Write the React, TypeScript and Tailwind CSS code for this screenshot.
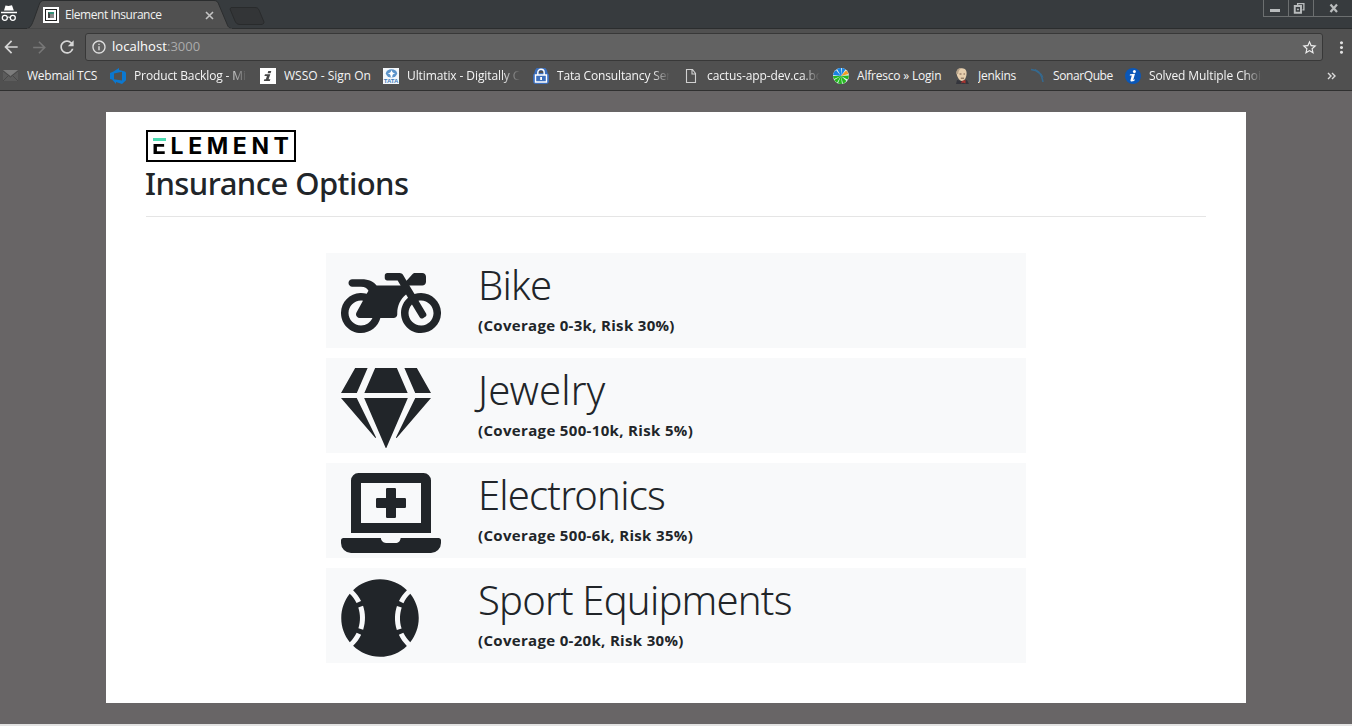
import React from "react";
import { FaMotorcycle, FaGem, FaLaptopMedical, FaBaseballBall } from "react-icons/fa";
import { MdArrowBack, MdArrowForward, MdRefresh, MdInfoOutline, MdStarBorder, MdMoreVert } from "react-icons/md";

const options = [
  { Icon: FaMotorcycle, title: "Bike", detail: "(Coverage 0-3k, Risk 30%)", box: "w-[100px]", tracking: "tracking-[-0.8px]", sub: "tracking-[0.32px]" },
  { Icon: FaGem, title: "Jewelry", detail: "(Coverage 500-10k, Risk 5%)", box: "w-[90px]", tracking: "tracking-[0.1px]", sub: "tracking-[0.34px]" },
  { Icon: FaLaptopMedical, title: "Electronics", detail: "(Coverage 500-6k, Risk 35%)", box: "w-[100px]", tracking: "tracking-[-0.8px]", sub: "tracking-[0.34px]" },
  { Icon: FaBaseballBall, title: "Sport Equipments", detail: "(Coverage 0-20k, Risk 30%)", box: "w-[78px]", tracking: "tracking-[-0.8px]", sub: "tracking-[0.32px]" },
];

const MailIcon = () => (
  <svg className="size-4" viewBox="0 0 16 16">
    <path d="M0 2h15v11H0z" fill="#5c5c5c" />
    <path d="M0 2l7.5 6L15 2z" fill="#7c7c7c" />
    <path d="M0 3l7.5 6L15 3M0 13l5-5M15 13l-5-5" stroke="#484848" fill="none" />
  </svg>
);
const BacklogIcon = () => (
  <svg className="size-4" viewBox="0 0 16 16">
    <path fillRule="evenodd" d="M0 5l3-1.2L9 0v2l6 1.5 1 1.2v7.6L12 16l-6-2v2l-4-4.5L0 11zM4 5.5v5.8l8 1.2V3.7z" fill="#0b78d0" />
  </svg>
);
const InfoSquare = () => (
  <svg className="size-4" viewBox="0 0 16 16">
    <path d="M0 0h16v16H0z" fill="#fff" />
    <path d="M8.300 3h3l-.7 2.200H7.600zM5 6.200h5.300l-1.700 5h1.800l-.6 1.800H3.800l.6-1.800h1.500l1-3.200H4.400z" fill="#444" />
  </svg>
);
const TataIcon = () => (
  <span className="flex size-4 flex-col items-center bg-[#f4f8fc]">
    <svg className="h-[10px] w-[13px] shrink-0" viewBox="0 0 13 10">
      <ellipse cx="6.5" cy="5.3" rx="5.6" ry="4.100" fill="#5b94cb" />
      <path d="M2.500 5.500C5 5 6 4 6.200 2.500h.6C7 4 8 5 10.500 5.500 8 5.500 7.200 7 7.200 9.500H5.800C5.800 7 5 5.500 2.500 5.500z" fill="#fff" />
    </svg>
    <span className="font-['Liberation_Sans'] text-[6px] font-bold leading-[6px] text-[#3f7cba]">TATA</span>
  </span>
);
const LockIcon = () => (
  <svg className="size-4" viewBox="0 0 16 16">
    <rect x="0" y="5" width="16" height="11" rx="3" fill="#3c6fbd" />
    <path d="M3.500 7V4.500a4.500 4 0 0 1 9 0V7" fill="none" stroke="#3c6fbd" strokeWidth="4" />
    <path d="M4.800 7V4.500a3.200 3.200 0 0 1 6.400 0V7M2.500 7h11v7h-11z" fill="none" stroke="#fff" strokeWidth="1.400" />
    <path d="M7.200 9h1.800v3H7.200z" fill="#fff" />
  </svg>
);
const PageIcon = () => (
  <svg className="size-4" viewBox="0 0 16 16">
    <path d="M3.500 1.500h6l3 4v9h-9zM9 1.500V6h3.500" fill="none" stroke="#d0d0d0" strokeWidth="1.100" />
  </svg>
);
const PinwheelIcon = () => (
  <svg className="size-4" viewBox="0 0 16 16">
    <circle cx="8" cy="8" r="8" fill="#dff3f2" />
    <path d="M8 8L0 7a8 8 0 0 1 3-5zM8 8L4 1a8 8 0 0 1 4-1z" fill="#1a82e2" />
    <path d="M8 8L9 0a8 8 0 0 1 3.500 1.500z" fill="#1a82e2" />
    <path d="M8 8l5-5.500A8 8 0 0 1 15.500 6z" fill="#f49b1f" />
    <path d="M8 8l8-.5a8 8 0 0 1-1.500 4zM8 8l5.500 5A8 8 0 0 1 10 15.700zM8 8l1 8a8 8 0 0 1-4-.8zM8 8l-4 6.800A8 8 0 0 1 1.300 12zM8 8l-7 3A8 8 0 0 1 0 8z" fill="#26b51e" />
  </svg>
);
const ButlerIcon = () => (
  <svg className="size-4" viewBox="0 0 16 16">
    <path d="M2 16l1-4 5 1 5-1 2 4z" fill="#34353c" />
    <path d="M2.500 5C2.500 1.500 5 0 8 .2c3.500.1 5 2.800 4.500 6.300-.3 3-2 6.500-4.500 6.500S3 9 2.500 5z" fill="#e7cfae" />
    <path d="M2.500 6C2 2 4 0 7.500 0 5 1.500 4.500 3 4.200 6z" fill="#b8a48a" />
    <path d="M5.500 6h2M9.500 6H11M6.800 10.200h3.200" stroke="#6b5142" strokeWidth=".9" />
    <path d="M8 13l3.500-1v3.500L9 14.500l-2 1z" fill="#a9342f" />
  </svg>
);
const SonarIcon = () => (
  <svg className="size-4" viewBox="0 0 16 16" fill="none" stroke="#356a90">
    <path d="M2 1.500c7 .5 11 5 12 12.500" strokeWidth="1.500" />
    <path d="M6 1.500c4 1.500 7 4.500 8 8" strokeWidth=".9" />
  </svg>
);
const InfoRound = () => (
  <svg className="size-4" viewBox="0 0 16 16">
    <circle cx="8" cy="8" r="8" fill="#0a57b8" />
    <circle cx="9.400" cy="3.400" r="1.500" fill="#fff" />
    <path d="M5 6.200L10 5.800l-1.800 6.200 1.800-.8-.4 1.400c-1.200 1-4.700 1.700-4.100-.6l1.300-4.500H4.700z" fill="#fff" />
  </svg>
);

const fade = "[mask-image:linear-gradient(to_right,black_84%,transparent)]";
const bookmarks = [
  { Icon: MailIcon, label: "Webmail TCS", cell: "w-[107px]", text: "w-[80px] tracking-[-0.25px]" },
  { Icon: BacklogIcon, label: "Product Backlog - Micro", cell: "w-[150px]", text: "w-[113px] tracking-[-0.12px] " + fade },
  { Icon: InfoSquare, label: "WSSO - Sign On", cell: "w-[123px]", text: "w-[96px] tracking-[0px]" },
  { Icon: TataIcon, label: "Ultimatix - Digitally Con", cell: "w-[150px]", text: "w-[113px] tracking-[-0.1px] " + fade },
  { Icon: LockIcon, label: "Tata Consultancy Services", cell: "w-[150px]", text: "w-[113px] tracking-[-0.15px] " + fade },
  { Icon: PageIcon, label: "cactus-app-dev.ca.boe", cell: "w-[150px]", text: "w-[113px] tracking-[-0.1px] " + fade },
  { Icon: PinwheelIcon, label: "Alfresco » Login", cell: "w-[121px]", text: "w-[95px] tracking-[-0.2px]" },
  { Icon: ButlerIcon, label: "Jenkins", cell: "w-[75px]", text: "w-[50px] tracking-[-0.25px]" },
  { Icon: SonarIcon, label: "SonarQube", cell: "w-[96px]", text: "w-[70px] tracking-[-0.4px]" },
  { Icon: InfoRound, label: "Solved Multiple Choice", cell: "w-[150px]", text: "w-[113px] tracking-[-0.1px] " + fade },
];

function TabStrip() {
  return (
    <div className="relative flex h-[29px] border-b border-[#2b2d2e] bg-[#373b3e]">
      <svg className="absolute left-0 top-0 h-[29px] w-[270px]" viewBox="0 0 270 29">
        <path d="M26 29C31 28 32 24 34 19L39 5C40 2 41 .5 44 .5H214C217 .5 218 2 219 5L227 24C228 27 229 28 233 29z" fill="#505050" stroke="#2b2d2e" />
        <path d="M27 29.500H232" stroke="#505050" strokeWidth="2" />
        <path d="M231 7.500H255C257 7.500 258 8 259 10L264 22C264 23.500 263 24.500 261 24.500H240C237 24.500 236 23 235 21L230 9z" fill="#333537" stroke="#292b2c" />
      </svg>
      <svg className="relative mt-[5px] h-[17px] w-[17px]" viewBox="0 0 17 17" fill="none" stroke="#fff">
        <path d="M5.500.5L8.500 1 12 .2 13.800 5.500H4z" fill="#fff" stroke="none" />
        <path d="M1 7.500h16" strokeWidth="1.500" />
        <circle cx="4.800" cy="12.800" r="2.500" strokeWidth="1.300" />
        <circle cx="12.800" cy="12.800" r="2.500" strokeWidth="1.300" />
        <path d="M7.300 12.500q1.500-1 3 0" />
      </svg>
      <div className="relative ml-[26px] mt-[7px] flex size-4 items-center justify-center bg-white">
        <div className="flex size-[12px] items-center justify-center border border-[#222]">
          <span className="h-[6px] w-[6px] border-l-2 border-t-2 border-[#444] border-t-[#348f78] bg-[#888]" />
        </div>
      </div>
      <span className="relative ml-[6px] mt-[7px] w-[130px] whitespace-nowrap text-[12px] leading-4 tracking-[-0.45px] text-[#f1f1f1]">Element Insurance</span>
      <svg className="relative ml-[10px] mt-[11px] size-[9px]" viewBox="0 0 9 9">
        <path d="M1 1l7 7M8 1L1 8" stroke="#c4c4c4" strokeWidth="1.600" />
      </svg>
      <div className="ml-auto flex h-[17px] w-[89px] border-b border-l border-[#6c6f70] text-[#b9bcbd]">
        <div className="flex w-[25px] items-end justify-center border-r border-[#6c6f70] pb-[4px] pr-[2px]">
          <span className="h-[3px] w-[10px] bg-[#b9bcbd]" />
        </div>
        <svg className="h-4 w-[25px] border-r border-[#6c6f70]" viewBox="0 0 25 16" fill="none" stroke="#b9bcbd">
          <path d="M9 5V3.500h6.500V10H14" strokeWidth="1.400" />
          <path d="M6 6h6.500v7H6z" strokeWidth="2" />
          <path d="M8.800 9h1v1h-1z" />
        </svg>
        <svg className="h-4 w-[38px]" viewBox="0 0 38 16">
          <path d="M16.500 4.500l6.500 7.500M23 4.500L16.500 12" stroke="#b9bcbd" strokeWidth="2.200" />
        </svg>
      </div>
    </div>
  );
}

function Toolbar() {
  return (
    <div className="flex h-[32px] items-end bg-[#505050] pt-1">
      <div className="flex h-[28px] w-[85px] items-center text-[#d6d6d6]">
        <MdArrowBack className="ml-px size-[20px]" />
        <MdArrowForward className="ml-[9px] size-[19px] text-[#777]" />
        <MdRefresh className="ml-[8px] size-[20px]" />
      </div>
      <div className="flex h-[28px] w-[1238px] items-center rounded-[3px] border border-[#383838] bg-[#626262] pl-[5px]">
        <MdInfoOutline className="size-[16px] text-[#e0e0e0]" />
        <span className="ml-[5px] text-[13px] tracking-[0.05px] text-white">localhost<span className="text-[#ababab]">:3000</span></span>
        <MdStarBorder className="ml-auto mr-[4px] size-[17px] text-[#eeeeee]" />
      </div>
      <div className="flex h-[28px] items-center">
        <MdMoreVert className="ml-[9px] size-[19px] text-[#e0e0e0]" />
      </div>
    </div>
  );
}

function BookmarksBar() {
  return (
    <div className="flex h-[30px] items-center border-b border-[#303030] bg-[#505050] pl-[3px]">
      {bookmarks.map(({ Icon, label, cell, text }) => (
        <div key={label} className={"flex shrink-0 items-center gap-2 " + cell}>
          <span className="size-4 shrink-0"><Icon /></span>
          <span className={"block shrink-0 overflow-hidden whitespace-nowrap text-[12px] leading-[18px] text-[#f4f4f4] " + text}>{label}</span>
        </div>
      ))}
      <svg className="ml-[52px] h-[8px] w-[9px]" viewBox="0 0 9 8" fill="none" stroke="#dcdcdc" strokeWidth="1.400">
        <path d="M1 1l3 3-3 3M5 1l3 3-3 3" />
      </svg>
    </div>
  );
}

function Logo() {
  return (
    <div className="flex h-[32px] w-[150px] items-center justify-between border-2 border-black pl-[4px] pr-[5px] font-['Inter'] text-[23px] font-bold leading-[28px] text-black">
      <span className="relative bg-[linear-gradient(to_bottom,transparent_12px,#000_12px)] bg-clip-text text-transparent before:absolute before:left-[1px] before:top-[6px] before:h-[3px] before:w-[13px] before:bg-[#4bdcb2] before:content-['']">E</span>
      {"LEMENT".split("").map((letter, i) => <span key={i}>{letter}</span>)}
    </div>
  );
}

export default function App() {
  return (
    <div className="flex h-[726px] w-[1352px] flex-col overflow-hidden bg-[#686566] font-['Open_Sans',sans-serif]">
      <TabStrip />
      <Toolbar />
      <BookmarksBar />
      <main className="mx-auto mt-[21px] flex h-[591px] w-[1140px] flex-col bg-white px-[40px] pt-[18px] text-[#212529]">
        <Logo />
        <h1 className="h-[55px] border-b border-[#e5e5e5] font-['Noto_Sans'] text-[31px] font-medium leading-[42px] tracking-[-0.55px]"><span className="-ml-px">Insurance Options</span></h1>
        <div className="mt-[36px] flex w-[700px] flex-col gap-[10px] self-center">
          {options.map(({ Icon, title, detail, box, tracking, sub }) => (
            <section key={title} className="flex h-[95px] bg-[#f8f9fa] pl-[15px] pt-[10px]">
              <div className="w-[137px]"><Icon className={"h-[80px] " + box} /></div>
              <div className="-mt-[2px]">
                <h2 className={"font-['Noto_Sans'] text-[40px] font-light leading-[48px] " + tracking}><span>{title}</span></h2>
                <p className={"mt-[4px] text-[15px] font-bold leading-[24px] " + sub}><span>{detail}</span></p>
              </div>
            </section>
          ))}
        </div>
      </main>
      <div className="mt-auto h-[2px] bg-[#e3e3e3]" />
    </div>
  );
}
